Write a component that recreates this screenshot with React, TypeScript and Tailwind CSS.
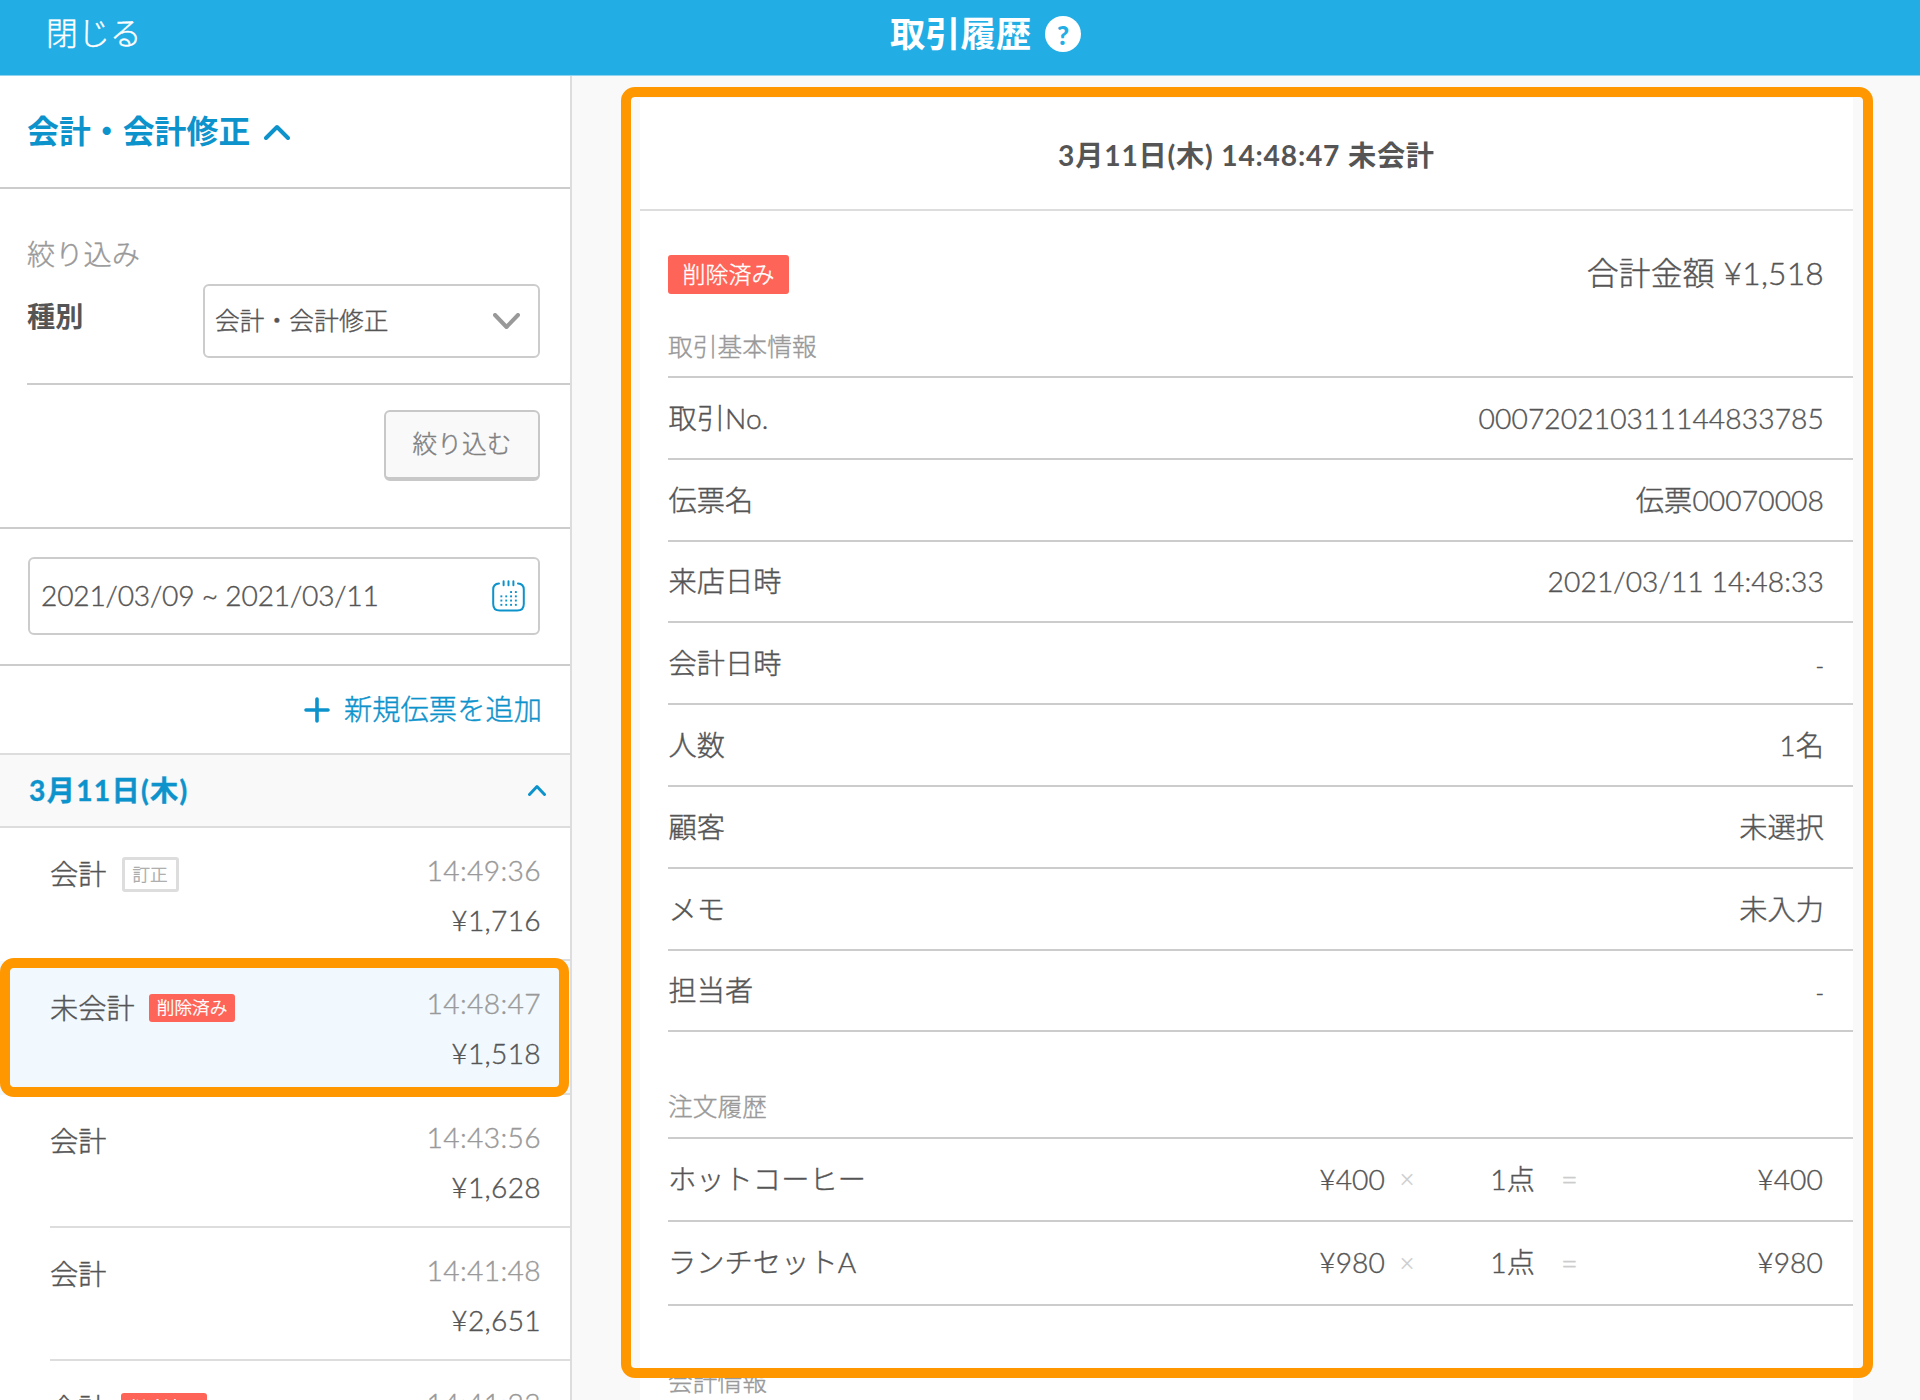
import React from "react";

type Entry = { kind: string; badge?: "fixed" | "deleted"; time: string; price: string; selected?: boolean };

const entries: Entry[] = [
  { kind: "会計", badge: "fixed", time: "14:49:36", price: "¥1,716" },
  { kind: "未会計", badge: "deleted", time: "14:48:47", price: "¥1,518", selected: true },
  { kind: "会計", time: "14:43:56", price: "¥1,628" },
  { kind: "会計", time: "14:41:48", price: "¥2,651" },
  { kind: "会計", badge: "deleted", time: "14:41:23", price: "¥1,518" },
];

const details: [string, string][] = [
  ["取引No.", "000720210311144833785"],
  ["伝票名", "伝票00070008"],
  ["来店日時", "2021/03/11 14:48:33"],
  ["会計日時", "-"],
  ["人数", "1名"],
  ["顧客", "未選択"],
  ["メモ", "未入力"],
  ["担当者", "-"],
];

const orders = [
  { name: "ホットコーヒー", unit: "¥400", qty: "1点", total: "¥400" },
  { name: "ランチセットA", unit: "¥980", qty: "1点", total: "¥980" },
];

function Chevron({ className, width, height, stroke, up }: { className?: string; width: number; height: number; stroke: number; up?: boolean }) {
  const h = stroke / 2;
  const d = up
    ? `M${h} ${height - h}L${width / 2} ${h + 1}L${width - h} ${height - h}`
    : `M${h} ${h}L${width / 2} ${height - h - 1}L${width - h} ${h}`;
  return (
    <svg className={className} width={width} height={height} fill="none" stroke="currentColor" strokeWidth={stroke} strokeLinecap="round" strokeLinejoin="round">
      <path d={d} />
    </svg>
  );
}

function CalendarIcon() {
  const dots: [number, number][] = [];
  [12, 16.3, 20.5, 24.8].forEach((y, r) =>
    [9.3, 14.2, 19, 23.8].forEach((x, c) => {
      if (r > 0 || c > 1) dots.push([x, y]);
    })
  );
  return (
    <svg width="33" height="32" viewBox="0 0 33 32" fill="none" stroke="currentColor" strokeWidth="2" strokeLinecap="round">
      <path d="M7 3.5Q1.2 3.8 1.2 9.5V24Q1.2 30.6 7.8 30.6H25.2Q31.8 30.6 31.8 24V9.5Q31.8 3.8 26 3.5" />
      <path d="M11.6 1.3V5.2M16.5 1.3V5.2M21.4 1.3V5.2" />
      {dots.map(([x, y]) => (
        <rect key={`${x}-${y}`} x={x - 0.9} y={y - 0.9} width="1.9" height="1.9" fill="currentColor" stroke="none" />
      ))}
    </svg>
  );
}

function EntryRow({ e }: { e: Entry }) {
  return (
    <div className={`relative h-[133.3px] shrink-0 pl-[50px] ${e.selected ? "bg-[#f1f9ff]" : ""}`}>
      <div className="flex h-full justify-between border-b-2 border-[#ddd] pr-[29px]">
        <div className="flex h-[93px] items-center">
          <span>{e.kind}</span>
          {e.badge === "fixed" && (
            <span className="ml-[15px] flex h-[35px] w-[57px] items-center justify-center rounded-[3px] border-[3px] border-[#ddd] text-[17.6px] text-[#aaa]">訂正</span>
          )}
          {e.badge === "deleted" && (
            <span className="ml-[14.5px] flex h-[28.5px] w-[85.5px] items-center justify-center rounded-[3px] bg-[#ff6458] text-[17.6px] text-white">削除済み</span>
          )}
        </div>
        <div className="flex flex-col items-end pt-[17px]">
          <span className="leading-[50px] tracking-[0.35px] text-[#999]">{e.time}</span>
          <span className="leading-[50px] tracking-[0.3px]">{e.price}</span>
        </div>
      </div>
      {e.selected && <div className="absolute top-[-3px] left-0 z-10 h-[139px] w-[569px] rounded-[14px] border-[10px] border-[#ff9800]" />}
    </div>
  );
}

export default function App() {
  return (
    <div className="flex h-[1400px] w-[1920px] flex-col overflow-hidden bg-[#f9f9f9] font-['Lato','Noto_Sans_CJK_JP',sans-serif] text-[28.2px] leading-none font-light tracking-[0.1px] text-[#555] [-webkit-text-stroke-width:0.4px]">
      <header className="grid h-[76px] shrink-0 grid-cols-[890px_1fr] items-center border-b border-[#8fd3ee] bg-[#22ade5] pb-[8px] text-white">
        <div className="pl-[46px] text-[31.8px]">閉じる</div>
        <div className="flex items-center pt-[1px] [-webkit-text-stroke-width:0px]">
          <span className="text-[35.3px] font-bold tracking-normal">取引履歴</span>
          <span className="ml-[14px] flex size-[36px] items-center justify-center rounded-full bg-white pt-[2px] text-[26px] font-black text-[#22ade5]">?</span>
        </div>
      </header>

      <div className="flex min-h-0 flex-1">
        <aside className="flex w-[572px] shrink-0 flex-col overflow-hidden border-r-2 border-[#ddd] bg-white">
          <div className="flex h-[113px] shrink-0 items-center border-b-2 border-[#ccc] pl-[27px] text-[#0d93cc]">
            <span className="text-[31.8px] font-bold [-webkit-text-stroke-width:0px]">会計・会計修正</span>
            <Chevron up className="ml-[14px]" width={26} height={16} stroke={4} />
          </div>

          <div className="flex h-[340px] shrink-0 flex-col border-b-2 border-[#ccc] pl-[27px]">
            <div className="mt-[51px] text-[#999]">絞り込み</div>
            <div className="mt-[16px] flex h-[74px] justify-between pr-[30px]">
              <span className="mt-[18px] font-bold [-webkit-text-stroke-width:0px]">種別</span>
              <div className="flex w-[337px] items-center justify-between rounded-md border-2 border-[#ccc] bg-white pr-[18px] pl-[10px] text-[24.7px]">
                <span>会計・会計修正</span>
                <Chevron className="text-[#999]" width={27} height={17} stroke={4} />
              </div>
            </div>
            <div className="mt-[25px] border-t-2 border-[#ccc]" />
            <button className="mt-[25px] mr-[30px] flex h-[71px] w-[156px] items-center justify-center self-end rounded-md border-2 border-b-4 border-[#c8c8c8] bg-[#f9f9f9] text-[24.7px] text-[#808080]">絞り込む</button>
          </div>

          <div className="h-[137px] shrink-0 border-b-2 border-[#ccc] pt-[28px] pr-[30px] pl-[28px]">
            <div className="flex h-[78px] items-center justify-between rounded-md border-2 border-[#ccc] pr-[13px] pl-[11px]">
              <span className="pb-[2px] tracking-[-0.2px]">2021/03/09 ~ 2021/03/11</span>
              <span className="text-[#0d93cc]"><CalendarIcon /></span>
            </div>
          </div>

          <div className="flex h-[89px] shrink-0 items-center justify-end border-b-2 border-[#ddd] pr-[28px] text-[#0d93cc]">
            <svg width="26" height="26" fill="none" stroke="currentColor" strokeWidth="3.6" strokeLinecap="round"><path d="M13 2V24M2 13H24" /></svg>
            <span className="ml-[14px]">新規伝票を追加</span>
          </div>

          <div className="flex h-[73px] shrink-0 items-center justify-between border-b-2 border-[#ddd] bg-[#f9f9f9] pr-[24px] pb-[1px] pl-[29px] text-[#0d93cc]">
            <span className="font-bold tracking-[1.3px]">3月11日(木)</span>
            <Chevron up width={18} height={12} stroke={3} />
          </div>

          {entries.map((e) => (
            <EntryRow key={e.time} e={e} />
          ))}
        </aside>

        <main className="relative min-w-0 flex-1 pt-[22px] pl-[68px]">
          <div className="h-[1302px] w-[1213px] overflow-hidden bg-white">
            <div className="flex h-[113px] items-center justify-center border-b-2 border-[#ddd] pt-[4px] font-bold tracking-[0.8px] [-webkit-text-stroke-width:0px]">3月11日(木) 14:48:47 未会計</div>
            <div className="pl-[28px]">
              <div className="flex h-[124px] items-center justify-between pt-[2px] pr-[29px]">
                <span className="flex h-[39px] w-[121px] items-center justify-center rounded-[3px] bg-[#ff6458] text-[22.9px] text-white">削除済み</span>
                <span className="text-[31.8px] tracking-[0.2px]">合計金額 ¥1,518</span>
              </div>
              <div className="h-[43px] border-b-2 border-[#ccc] text-[24.7px] text-[#999]">取引基本情報</div>
              {details.map(([k, v]) => (
                <div key={k} className="flex h-[81.8px] items-center justify-between border-b-2 border-[#ccc] pr-[29px] pl-[0.5px]">
                  <span>{k}</span>
                  {v === "-" ? <span className="mt-[6px] text-[23px]">-</span> : <span>{v}</span>}
                </div>
              ))}
              <div className="flex h-[106.5px] items-end border-b-2 border-[#ccc] pb-[17px] text-[24.7px] text-[#999]">注文履歴</div>
              {orders.map((o) => (
                <div key={o.name} className="grid h-[83.5px] grid-cols-[1fr_44px_106px_60px_228px] items-center border-b-2 border-[#ccc] pr-[30px] pb-[2px] text-right">
                  <span className="flex justify-between"><span>{o.name}</span><span>{o.unit}</span></span>
                  <span className="text-center text-[25px] text-[#ccc]">×</span>
                  <span>{o.qty}</span>
                  <span className="pr-[17px] text-[29px] text-[#ccc]">=</span>
                  <span>{o.total}</span>
                </div>
              ))}
              <div className="mt-[64px] text-[24.7px] text-[#999]">会計情報</div>
            </div>
          </div>
          <div className="absolute top-[11px] left-[49px] h-[1291px] w-[1252px] rounded-[14px] border-[10px] border-[#ff9800]" />
        </main>
      </div>
    </div>
  );
}
